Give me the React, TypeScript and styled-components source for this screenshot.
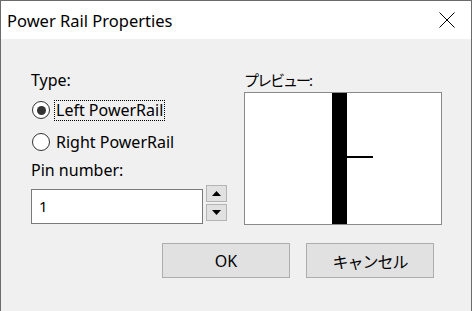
import React from "react";
import styled, { createGlobalStyle } from "styled-components";

const GlobalStyle = createGlobalStyle`
    html, body {
        margin: 0;
        padding: 0;
        background: #f0f0f0;
    }
    * {
        box-sizing: border-box;
    }
`;

const font = `"Noto Sans", "Noto Sans CJK JP", sans-serif`;

const Window = styled.div`
    width: 472px;
    height: 311px;
    display: flex;
    flex-direction: column;
    background: #f0f0f0;
    border: 1px solid #6b6b6b;
    border-bottom: none;
    font-family: ${font};
    color: #000;
    overflow: hidden;
`;

const TitleBar = styled.div`
    height: 38px;
    flex-shrink: 0;
    background: #fff;
    display: flex;
    align-items: center;
    padding-left: 6px;
`;

const Title = styled.div`
    flex: 1;
    font-size: 16.5px;
    line-height: 22px;
    margin-top: 2px;
`;

const CloseButton = styled.div`
    width: 46px;
    height: 38px;
    display: flex;
    align-items: center;
    justify-content: center;
    margin-right: 1px;
`;

const Body = styled.div`
    flex: 1;
    display: flex;
    flex-direction: column;
    padding: 31px 37px 0 30px;
`;

const Columns = styled.div`
    display: flex;
    gap: 17px;
`;

const LeftColumn = styled.div`
    width: 196px;
    display: flex;
    flex-direction: column;
`;

const RightColumn = styled.div`
    display: flex;
    flex-direction: column;
`;

const Label = styled.div<{ $cjk?: boolean }>`
    font-size: ${(p) => (p.$cjk ? "15px" : "16px")};
    letter-spacing: ${(p) => (p.$cjk ? "-2px" : "normal")};
    line-height: 20px;
    height: 20px;
    white-space: nowrap;
`;

const RadioGroup = styled.div`
    display: flex;
    flex-direction: column;
    margin-top: 4px;
`;

const RadioRow = styled.div`
    height: 32px;
    display: flex;
    align-items: center;
    gap: 4px;
    margin-left: 1px;
`;

const RadioCircle = styled.span<{ $checked?: boolean }>`
    width: 18px;
    height: 18px;
    border-radius: 50%;
    border: 1px solid #333;
    background: #fff;
    display: flex;
    align-items: center;
    justify-content: center;

    &::after {
        content: "";
        width: 9px;
        height: 9px;
        border-radius: 50%;
        background: #333;
        display: ${(p) => (p.$checked ? "block" : "none")};
    }
`;

const RadioText = styled.span<{ $focused?: boolean }>`
    font-size: 16px;
    line-height: 19px;
    padding: 0 1px;
    border: 1px dotted ${(p) => (p.$focused ? "#000" : "transparent")};
    white-space: nowrap;
`;

const PinLabel = styled(Label)`
    margin-top: 2px;
`;

const InputRow = styled.div`
    display: flex;
    gap: 3px;
    margin-top: 9px;
`;

const TextInput = styled.div`
    width: 172px;
    height: 35px;
    border: 1px solid #7a7a7a;
    background: #fff;
    font-size: 15px;
    line-height: 33px;
    padding-left: 7px;
`;

const Spinner = styled.div`
    display: flex;
    flex-direction: column;
    gap: 2px;
    margin-top: -4px;
`;

const SpinButton = styled.div`
    width: 21px;
    height: 17px;
    border: 1px solid #b4b4b4;
    background: #e1e1e1;
    display: flex;
    align-items: center;
    justify-content: center;
`;

const Preview = styled.div`
    margin-top: 2px;
    width: 198px;
    height: 133px;
    border: 1px solid #8a8a8a;
    background: #fff;

    svg {
        display: block;
    }
`;

const ButtonRow = styled.div`
    display: flex;
    justify-content: flex-end;
    gap: 16px;
    margin-top: 18px;
`;

const Button = styled.div<{ $cjk?: boolean }>`
    width: 128px;
    height: 35px;
    border: 1px solid #adadad;
    background: #e1e1e1;
    display: flex;
    align-items: center;
    justify-content: center;
    font-size: 16px;
    letter-spacing: ${(p) => (p.$cjk ? "-1px" : "normal")};
`;

const Arrow = ({ up }: { up?: boolean }) => (
    <svg width="9" height="5" viewBox="0 0 9 5">
        <polygon points={up ? "0,5 9,5 4.5,0" : "0,0 9,0 4.5,5"} fill="#000" />
    </svg>
);

const App = () => {
    return (
        <>
            <GlobalStyle />
            <Window>
                <TitleBar>
                    <Title>Power Rail Properties</Title>
                    <CloseButton>
                        <svg width="16" height="16" viewBox="0 0 16 16">
                            <path d="M0.5 0.5 L15.5 15.5 M15.5 0.5 L0.5 15.5" stroke="#000" strokeWidth="1" />
                        </svg>
                    </CloseButton>
                </TitleBar>
                <Body>
                    <Columns>
                        <LeftColumn>
                            <Label>Type:</Label>
                            <RadioGroup>
                                <RadioRow>
                                    <RadioCircle $checked />
                                    <RadioText $focused>Left PowerRail</RadioText>
                                </RadioRow>
                                <RadioRow>
                                    <RadioCircle />
                                    <RadioText>Right PowerRail</RadioText>
                                </RadioRow>
                            </RadioGroup>
                            <PinLabel>Pin number:</PinLabel>
                            <InputRow>
                                <TextInput>1</TextInput>
                                <Spinner>
                                    <SpinButton><Arrow up /></SpinButton>
                                    <SpinButton><Arrow /></SpinButton>
                                </Spinner>
                            </InputRow>
                        </LeftColumn>
                        <RightColumn>
                            <Label $cjk>プレビュー:</Label>
                            <Preview>
                                <svg width="196" height="131" viewBox="0 0 196 131">
                                    <rect x="87" y="0" width="15" height="131" fill="#000" />
                                    <rect x="102" y="63" width="26" height="2" fill="#000" />
                                </svg>
                            </Preview>
                        </RightColumn>
                    </Columns>
                    <ButtonRow>
                        <Button>OK</Button>
                        <Button $cjk>キャンセル</Button>
                    </ButtonRow>
                </Body>
            </Window>
        </>
    );
};

export default App;
